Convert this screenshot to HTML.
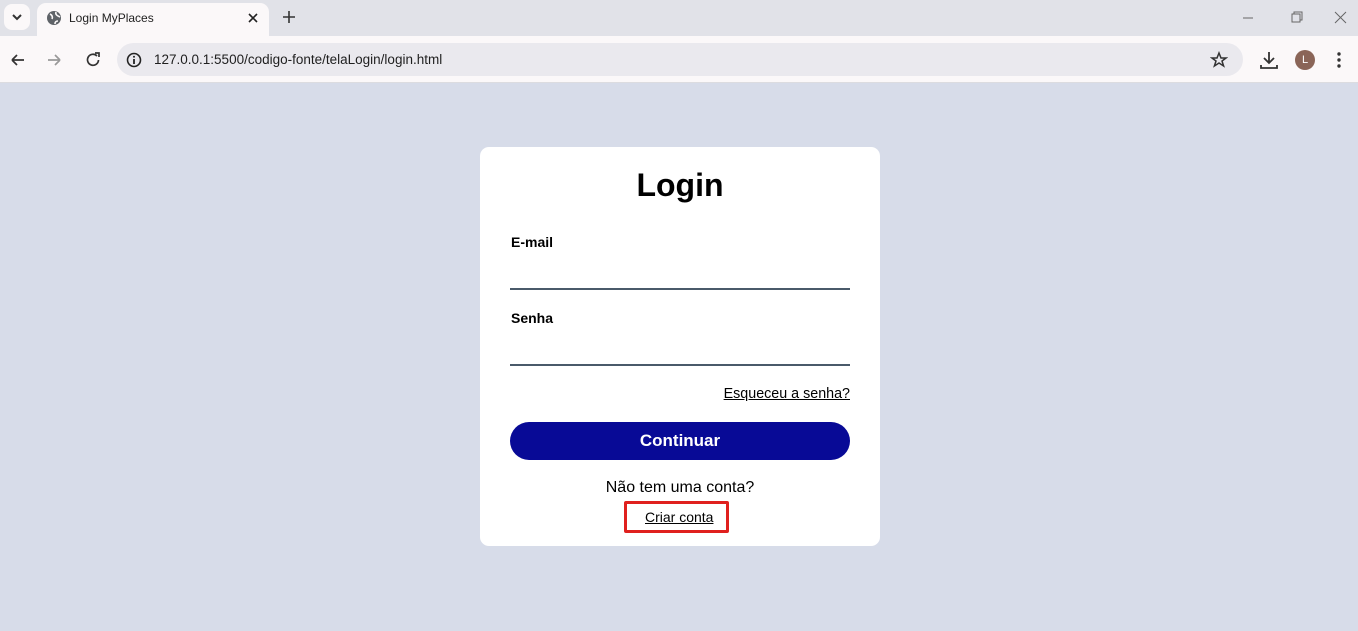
<!DOCTYPE html>
<html><head><meta charset="utf-8"><style>
*{margin:0;padding:0;box-sizing:border-box}
body{width:1358px;height:631px;overflow:hidden;font-family:"Liberation Sans",Arial,sans-serif;background:#d7dce9;position:relative}
.top{position:absolute;left:0;top:0;width:1358px;height:36px;background:#e1e2e8}
.tabbtn{position:absolute;left:4px;top:4px;width:26px;height:26px;background:#fbf8f9;border-radius:8px}
.tab{position:absolute;left:37px;top:3px;width:232px;height:33px;background:#fbf8f9;border-radius:9px 9px 0 0}
.bar{position:absolute;left:0;top:36px;width:1358px;height:47px;background:#fbf8f9;border-bottom:1px solid #dcdce0}
.url{position:absolute;left:117px;top:7px;width:1126px;height:33px;background:#eae9ee;border-radius:17px}
.t{position:absolute;font-size:13px;color:#1f1f1f;white-space:nowrap}
.card{position:absolute;left:480px;top:147px;width:400px;height:399px;background:#fff;border-radius:9px}
.ab{position:absolute;white-space:nowrap}
</style></head><body>
<div class="top">
 <div class="tabbtn"><svg width="26" height="26"><path d="M9 11l4 4 4-4" stroke="#333" stroke-width="2" fill="none"/></svg></div>
 <div class="tab">
  <svg style="position:absolute;left:9px;top:7px" width="16" height="16"><circle cx="8" cy="8" r="7" fill="#5f6368"/><path d="M4 4c2 1 3 3 2 5M10 2c-1 3 2 4 4 5M9 14c0-2 1-3 3-3" stroke="#fbf8f9" stroke-width="1.6" fill="none"/></svg>
  <div class="t" style="left:32px;top:8px;font-size:12px">Login MyPlaces</div>
  <svg style="position:absolute;left:210px;top:9px" width="12" height="12"><path d="M2 2l8 8M10 2l-8 8" stroke="#222" stroke-width="1.6"/></svg>
 </div>
 <svg style="position:absolute;left:282px;top:10px" width="14" height="14"><path d="M7 1v12M1 7h12" stroke="#333" stroke-width="1.6"/></svg>
 <svg style="position:absolute;left:1240px;top:10px" width="110" height="16"><path d="M3 8h10" stroke="#666"/><rect x="52" y="4" width="8" height="8" fill="none" stroke="#666"/><path d="M54 4v-2h8v8h-2" fill="none" stroke="#666"/><path d="M95 2l11 11M106 2l-11 11" stroke="#666"/></svg>
</div>
<div class="bar">
 <svg style="position:absolute;left:10px;top:16px" width="100" height="16"><path d="M2 8h12M2 8l5-5M2 8l5 5" stroke="#333" stroke-width="1.7" fill="none"/><path d="M38 8h12M50 8l-5-5M50 8l-5 5" stroke="#999" stroke-width="1.7" fill="none"/><path d="M87 4a5.5 5.5 0 1 0 1.5 4" stroke="#333" stroke-width="1.7" fill="none"/><path d="M85 1h4v4" stroke="#333" stroke-width="1.7" fill="none"/></svg>
 <div class="url">
  <svg style="position:absolute;left:9px;top:9px" width="16" height="16"><circle cx="8" cy="8" r="6.5" fill="none" stroke="#222" stroke-width="1.6"/><path d="M8 7v5" stroke="#222" stroke-width="1.8"/><circle cx="8" cy="4.7" r="1" fill="#222"/></svg>
  <div class="t" style="left:37px;top:9px;font-size:13.5px">127.0.0.1:5500/codigo-fonte/telaLogin/login.html</div>
  <svg style="position:absolute;left:1093px;top:8px" width="18" height="18"><path d="M9 2l2 5h5l-4 3 1.6 5L9 12l-4.6 3L6 10 2 7h5z" fill="none" stroke="#333" stroke-width="1.5"/></svg>
 </div>
 <svg style="position:absolute;left:1259px;top:14px" width="20" height="20"><path d="M10 2v10M5 8l5 5 5-5M2 15v3h16v-3" stroke="#333" stroke-width="1.8" fill="none"/></svg>
 <div style="position:absolute;left:1295px;top:14px;width:20px;height:20px;border-radius:50%;background:#8a6558;color:#fff;font-size:11px;text-align:center;line-height:20px">L</div>
 <svg style="position:absolute;left:1336px;top:15px" width="6" height="18"><circle cx="3" cy="3" r="1.7" fill="#333"/><circle cx="3" cy="9" r="1.7" fill="#333"/><circle cx="3" cy="15" r="1.7" fill="#333"/></svg>
</div>
<div class="card">
 <div class="ab" style="left:0;width:400px;text-align:center;top:20px;font-size:32px;font-weight:bold">Login</div>
 <div class="ab" style="left:31px;top:87px;font-size:14px;font-weight:bold">E-mail</div>
 <div style="position:absolute;left:30px;top:141px;width:340px;height:2px;background:#4a5a6a"></div>
 <div class="ab" style="left:31px;top:163px;font-size:14px;font-weight:bold">Senha</div>
 <div style="position:absolute;left:30px;top:217px;width:340px;height:2px;background:#4a5a6a"></div>
 <div class="ab" style="right:30px;top:239px;font-size:14.3px;text-decoration:underline">Esqueceu a senha?</div>
 <div style="position:absolute;left:30px;top:275px;width:340px;height:38px;border-radius:19px;background:#080a96;color:#fff;font-weight:bold;font-size:17px;text-align:center;line-height:38px">Continuar</div>
 <div class="ab" style="left:0;width:400px;text-align:center;top:332px;font-size:16px">Não tem uma conta?</div>
 <div style="position:absolute;left:144px;top:354px;width:105px;height:32px;border:3px solid #e0201e;border-radius:2px"></div>
 <div class="ab" style="left:165px;top:362px;font-size:14px;text-decoration:underline">Criar conta</div>
</div>
</body></html>
